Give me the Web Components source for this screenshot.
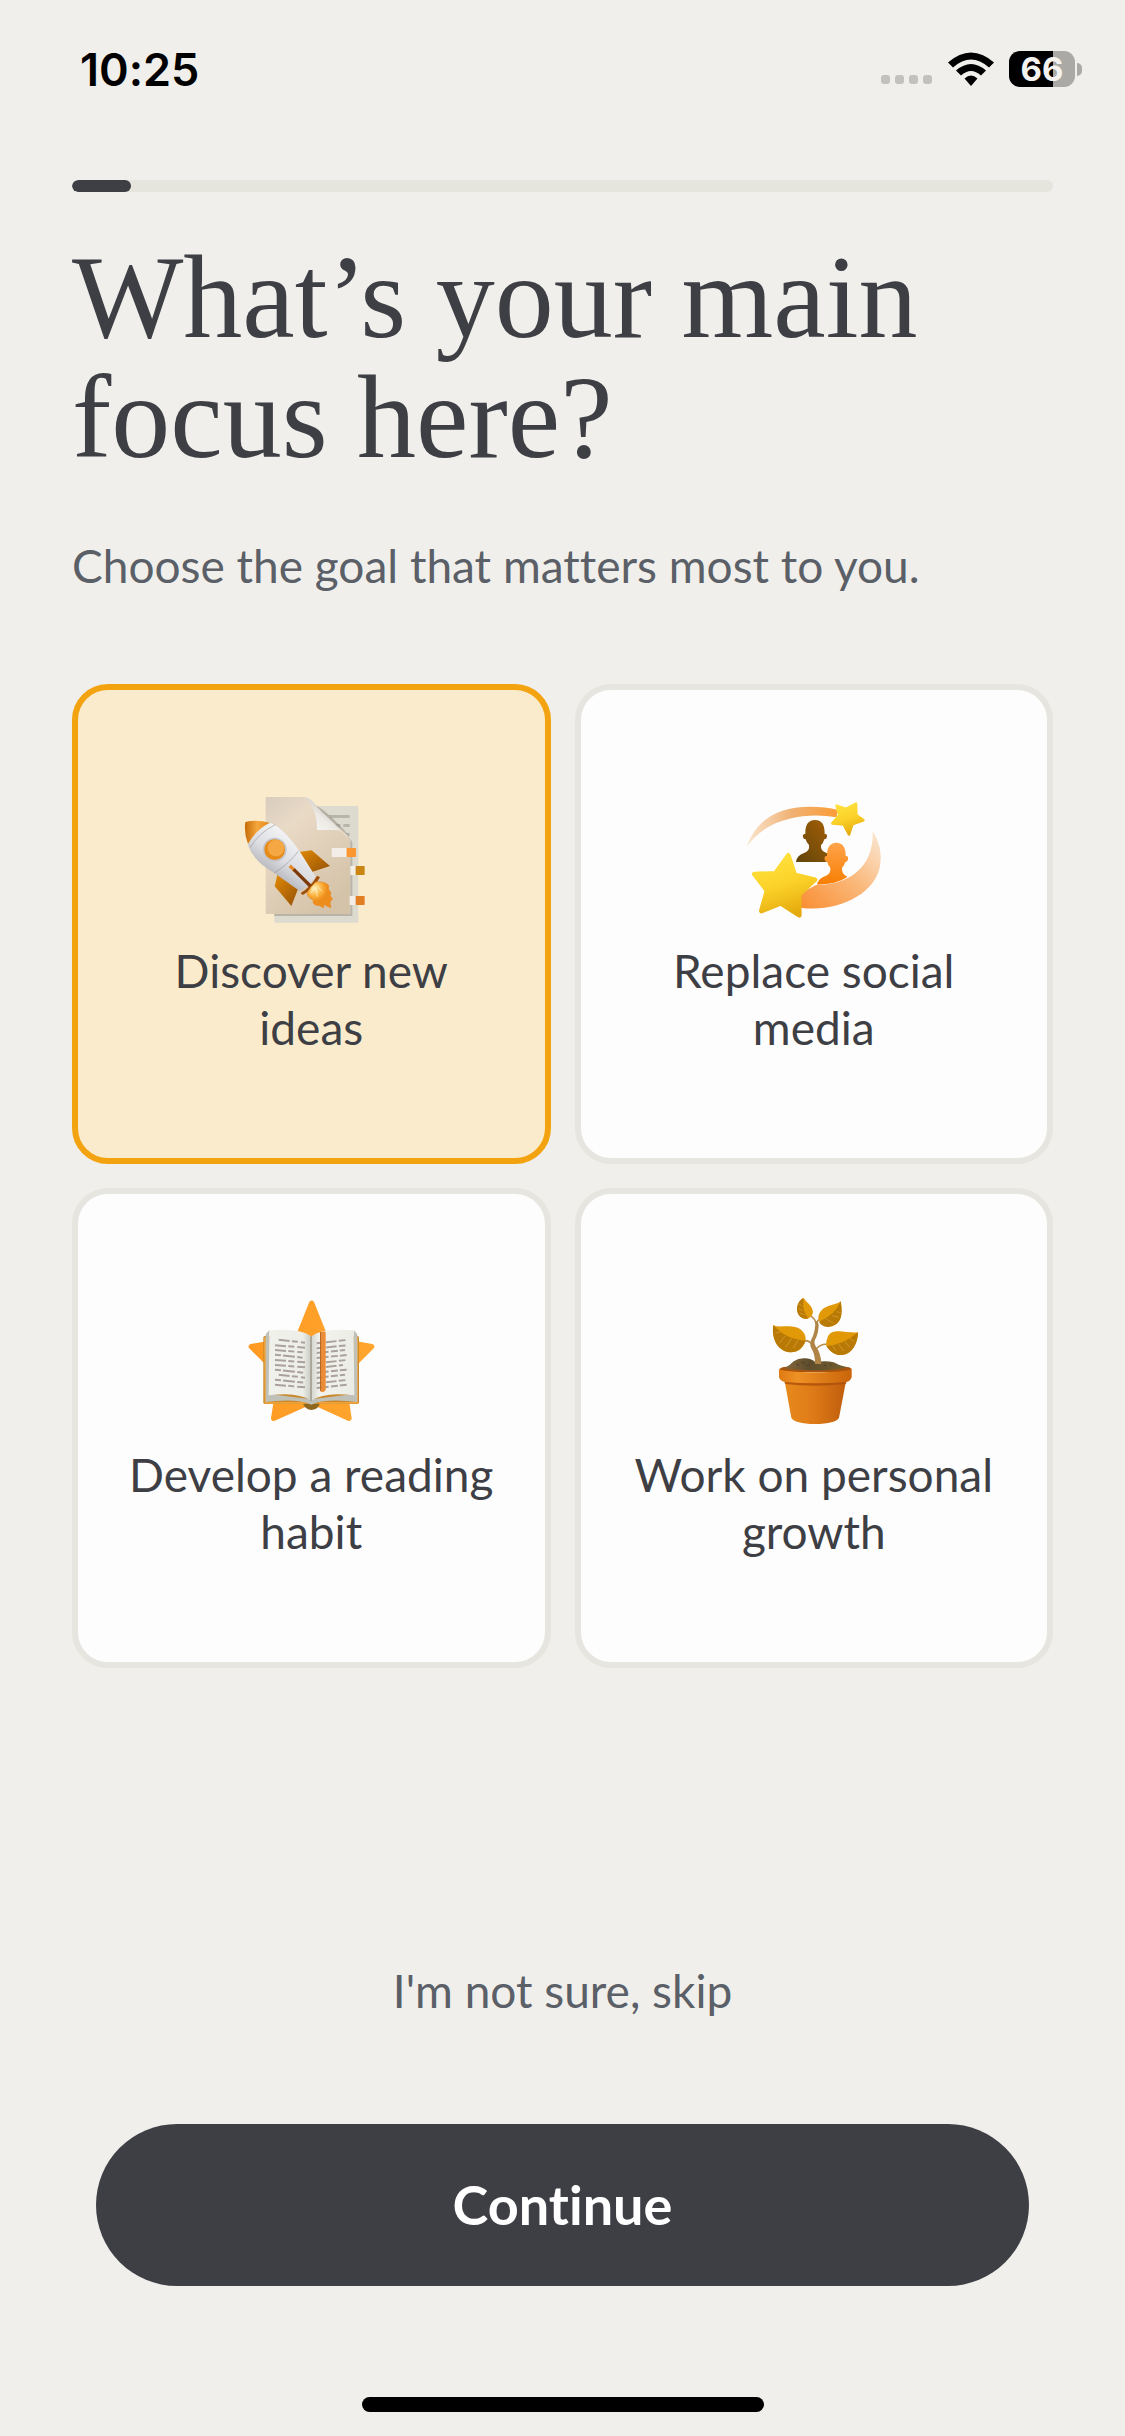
<!DOCTYPE html>
<html lang="en">
<head>
<meta charset="utf-8">
<meta name="viewport" content="width=device-width, initial-scale=1">
<title>What’s your main focus here?</title>
<style>
  :root {
    --page: #f0efeb;
    --ink: #3d3f45;
    --muted: #5b5f67;
    --line: #e6e5df;
    --accent: #f2a30f;
    --accent-soft: #fbebcd;
    --gutter: 72px;
  }

  body {
    margin: 0;
    background: var(--page);
    color: var(--ink);
    font-family: Lato, "Open Sans", sans-serif;
    font-size: 46px;
    font-variant-ligatures: none;
    line-height: 57px;
  }
</style>
</head>
<body>
<onboarding-screen>
  <status-bar slot="status" time="10:25" battery="66"></status-bar>
  <step-progress slot="progress" value="6" max="100"></step-progress>
  <h1 slot="title">What’s your main focus here?</h1>
  <p slot="subtitle">Choose the goal that matters most to you.</p>
  <goal-grid>
    <goal-card icon="rocket" selected>Discover new ideas</goal-card>
    <goal-card icon="social">Replace social media</goal-card>
    <goal-card icon="book">Develop a reading habit</goal-card>
    <goal-card icon="plant">Work on personal growth</goal-card>
  </goal-grid>
  <action-button slot="actions" variant="text">I'm not sure, skip</action-button>
  <action-button slot="actions">Continue</action-button>
</onboarding-screen>

<script>
/**
 * Creates a template element from the passed-in markup and styles.
 */
function createTemplate(templateString, styleString) {
  const template = document.createElement('template');
  template.innerHTML = `<style>*{box-sizing:border-box}${styleString}</style>${templateString}`;
  return template;
}

/** The base element, which clones the class template into an open shadow root. */
class CoreElement extends HTMLElement {
  constructor() {
    super();
    const shadowRoot = this.attachShadow({ mode: 'open' });
    shadowRoot.appendChild(this.constructor.template.content.cloneNode(true));
  }
}

/** The page frame: status, heading, content and the actions at the bottom. */
class OnboardingScreen extends CoreElement {}
OnboardingScreen.template = createTemplate(`
  <slot name="status"></slot>
  <main>
    <slot name="progress"></slot>
    <header>
      <slot name="title"></slot>
      <slot name="subtitle"></slot>
    </header>
    <slot></slot>
  </main>
  <footer><slot name="actions"></slot></footer>
  <div class="home"></div>
`, `
  :host {
    display: flex;
    flex-direction: column;
    min-height: 100vh;
  }
  main {
    padding: 42px var(--gutter) 48px;
  }
  header {
    padding: 46px 0 90px;
  }
  ::slotted(h1) {
    margin: 0 0 59px;
    font: 400 118px/120px "Liberation Serif", serif;
  }
  ::slotted(p) {
    margin: 0;
    color: var(--muted);
  }
  footer {
    display: flex;
    flex-direction: column;
    gap: 93px;
    margin-top: auto;
    padding: 0 96px;
  }
  .home {
    width: 402px;
    height: 15px;
    margin: 111px auto 24px;
    border-radius: 8px;
    background: #000;
  }
`);
customElements.define('onboarding-screen', OnboardingScreen);

/** The phone status bar with time, signal, wifi and battery. */
class StatusBar extends CoreElement {
  connectedCallback() {
    const level = this.getAttribute('battery');
    this.shadowRoot.querySelector('time').textContent = this.getAttribute('time');
    this.shadowRoot.querySelector('.cell').textContent = level;
    this.style.setProperty('--level', `${level}%`);
  }
}
StatusBar.template = createTemplate(`
  <time></time>
  <div class="icons">
    <svg class="signal" width="52" height="10" viewBox="0 0 52 10" fill="#c2c1be">
      <rect width="9" height="9" rx="3"/><rect x="14" width="9" height="9" rx="3"/>
      <rect x="28" width="9" height="9" rx="3"/><rect x="42" width="9" height="9" rx="3"/>
    </svg>
    <svg width="46" height="34" viewBox="0 0 46 34">
      <path d="M0 10.500Q23-9.500 46 10.500L41 15.500Q23-.500 5 15.500Z"/>
      <path d="M8 18.500Q23 5.500 38 18.500L33 23.500Q23 14.500 13 23.500Z"/>
      <path d="M16.500 26.500Q23 20.500 29.500 26.500L23 34Z"/>
    </svg>
    <div class="battery"><span class="cell"></span><span class="nub"></span></div>
  </div>
`, `
  :host {
    display: flex;
    align-items: center;
    justify-content: space-between;
    height: 138px;
    padding: 0 43px 0 80px;
    color: #000;
    font-family: Inter, sans-serif;
  }
  time {
    font-size: 45px;
    font-weight: 600;
  }
  .icons {
    display: flex;
    align-items: center;
    gap: 15px;
  }
  .signal {
    margin-top: 22px;
  }
  .battery {
    display: flex;
    align-items: center;
    gap: 2px;
  }
  .cell {
    width: 66px;
    border-radius: 11px;
    background: linear-gradient(90deg, #000 var(--level), #aaa9a6 var(--level));
    color: #f4f3f0;
    font-size: 33px;
    font-weight: 700;
    line-height: 36px;
    text-align: center;
  }
  .nub {
    width: 5px;
    height: 13px;
    border-radius: 0 5px 5px 0;
    background: #aaa9a6;
  }
`);
customElements.define('status-bar', StatusBar);

/** The bar that shows how far the onboarding has come. */
class StepProgress extends CoreElement {
  connectedCallback() {
    const progress = this.shadowRoot.querySelector('progress');
    progress.max = this.getAttribute('max');
    progress.value = this.getAttribute('value');
  }
}
StepProgress.template = createTemplate('<progress aria-label="Progress"></progress>', `
  :host {
    display: flex;
  }
  progress {
    appearance: none;
    width: 100%;
    height: 12px;
    border: 0;
    border-radius: 6px;
    background: #e5e4dd;
    overflow: hidden;
  }
  ::-webkit-progress-bar {
    background: #e5e4dd;
  }
  ::-webkit-progress-value {
    border-radius: 6px;
    background: var(--ink);
  }
`);
customElements.define('step-progress', StepProgress);

/** Lays out the cards and keeps only one of them selected. */
class GoalGrid extends CoreElement {
  connectedCallback() {
    this.addEventListener('goal-change', (event) => {
      this.querySelectorAll('goal-card').forEach((card) => {
        card.toggleAttribute('selected', card === event.target);
      });
    });
  }
}
GoalGrid.template = createTemplate('<slot></slot>', `
  :host {
    display: grid;
    grid-template-columns: 1fr 1fr;
    grid-auto-rows: minmax(480px, auto);
    gap: 24px;
  }
`);
customElements.define('goal-grid', GoalGrid);

/** A selectable goal with a picture and a label. */
class GoalCard extends CoreElement {
  static get observedAttributes() {
    return ['selected'];
  }

  connectedCallback() {
    this.shadowRoot.querySelector('goal-icon').setAttribute('name', this.getAttribute('icon'));
    this.shadowRoot.querySelector('input').addEventListener('change', () => {
      this.dispatchEvent(new CustomEvent('goal-change', { bubbles: true }));
    });
  }

  attributeChangedCallback() {
    this.shadowRoot.querySelector('input').checked = this.hasAttribute('selected');
  }
}
GoalCard.template = createTemplate(`
  <label>
    <input type="radio" name="goal">
    <goal-icon></goal-icon>
    <span><slot></slot></span>
  </label>
`, `
  :host {
    display: grid;
  }
  label {
    display: flex;
    flex-direction: column;
    align-items: center;
    justify-content: center;
    gap: 12px;
    position: relative;
    padding: 0 40px 6px;
    border: 6px solid var(--line);
    border-radius: 36px;
    background: #fdfdfd;
    text-align: center;
    cursor: pointer;
  }
  :host([selected]) label {
    border-color: var(--accent);
    background: var(--accent-soft);
  }
  input {
    position: absolute;
    inset: 0;
    margin: 0;
    opacity: 0;
  }
`);
customElements.define('goal-card', GoalCard);

const icons = {
  rocket: {
    viewBox: '28 21 432 432',
    art: `
      <defs>
        <linearGradient id="page" x1="0" y1="0" x2="0.600" y2="1"><stop stop-color="#d8ccbd"/><stop offset=".3" stop-color="#e9dac6"/><stop offset="1" stop-color="#d5c3a9"/></linearGradient>
        <linearGradient id="curl" x1="0" y1="1" x2=".7" y2=".2"><stop stop-color="#fff"/><stop offset=".6" stop-color="#edeae5"/><stop offset="1" stop-color="#bbb6ae"/></linearGradient>
        <linearGradient id="body" x1="1" y1="0" x2=".3" y2="1"><stop offset=".2" stop-color="#fafafb"/><stop offset=".6" stop-color="#dcdde1"/><stop offset="1" stop-color="#94969c"/></linearGradient>
        <linearGradient id="nose" x1="0" x2="1"><stop stop-color="#c56c08"/><stop offset=".5" stop-color="#f6a73e"/><stop offset="1" stop-color="#e18613"/></linearGradient>
        <linearGradient id="fin" x1="0" y1="0" x2="1" y2="1"><stop stop-color="#e18a05"/><stop offset="1" stop-color="#955007"/></linearGradient>
        <radialGradient id="flame" cx=".3" cy=".25"><stop stop-color="#fff0b8"/><stop offset=".6" stop-color="#fbb13c"/><stop offset="1" stop-color="#ed8d1c"/></radialGradient>
      </defs>
      <path fill="#dddacf" d="M134 81H386V431H134Z"/>
      <path fill="#b7b5ac" d="M296 108H360V117H305ZM318 135h14v9h-10ZM341 135h19v9h-19ZM340 162h20v9h-14Z"/>
      <path fill="#aaa496" opacity=".7" d="M362 180L368 190V411H134V405H362Z"/>
      <path fill="#8d8678" opacity=".5" d="M258 78Q300 103 352 163L361 183L300 125Z"/>
      <path fill="url(#page)" d="M108 54H222Q249 56 262 90L350 165Q361 176 361 196V405H108Z"/>
      <path fill="url(#curl)" d="M222 54Q249 57 263 88Q310 127 356 179Q345 151 308 153H262Q263 82 222 54Z"/>
      <path fill="#f3efe8" d="M306 207H351V234H306ZM362 261H378V288H362ZM360 351H378V378H360Z"/>
      <rect x="351" y="207" width="28" height="27" rx="2" fill="#fb9731"/>
      <rect x="378" y="261" width="27" height="27" rx="2" fill="#cb8513"/>
      <rect x="378" y="351" width="27" height="27" rx="2" fill="#e07e21"/>
      <path fill="url(#fin)" d="M202 220L246 214L301 261L240 281Z"/>
      <path fill="url(#fin)" d="M143 287L135 322L185 381L205 330Z"/>
      <path fill="url(#body)" d="M122 132Q156 142 208 214L258 293Q240 320 210 336L133 281Q73 249 54 197Q75 153 122 132Z"/>
      <path fill="url(#nose)" d="M47 129Q78 120 120 131Q80 151 55 195Q42 161 47 129Z"/>
      <path fill="none" stroke="#9a9ca1" stroke-width="2" d="M137 137Q88 161 61 206M207 215Q180 253 134 282"/>
      <circle cx="135" cy="212" r="36" fill="#c4c6cb"/>
      <circle cx="135" cy="212" r="31" fill="#e78b18"/>
      <circle cx="139" cy="207" r="25" fill="#f5a743"/>
      <path fill="#9d4f0b" d="M213 342Q245 322 262 290L271 295Q252 330 219 348Z"/>
      <path fill="none" stroke="#e3882a" stroke-width="10" d="M180 260L196 275"/>
      <path fill="none" stroke="#7c3a09" stroke-width="10" d="M192 271L242 321"/>
      <path fill="url(#flame)" stroke="#e98516" stroke-width="2" d="M232 342Q242 324 258 309Q287 307 297 319L296 329L304 342L301 350L308 359L301 370L303 386L290 380L283 376L281 386L270 380L257 378L250 371L252 364Q235 357 232 342Z"/>
      <path fill="none" stroke="#fff3cd" stroke-width="2" d="M255 323L244 343M259 326L263 353M263 323L279 338"/>`,
  },
  social: {
    viewBox: '36 21 432 432',
    art: `
      <defs>
        <linearGradient id="arc"><stop stop-color="#fae5d0"/><stop offset=".5" stop-color="#f0b172"/><stop offset="1" stop-color="#fb9c38"/></linearGradient>
        <linearGradient id="swoosh" x1="0" y1="1" x2="1" y2="0"><stop stop-color="#f98d32"/><stop offset=".5" stop-color="#fab778"/><stop offset="1" stop-color="#fae9d7"/></linearGradient>
        <linearGradient id="star" x1=".3" y1="0" x2=".6" y2="1"><stop stop-color="#ffe23c"/><stop offset=".5" stop-color="#fbd128"/><stop offset="1" stop-color="#e5aa0d"/></linearGradient>
        <linearGradient id="dark" x1="0" y1="1" x2="1" y2="0"><stop stop-color="#62450b"/><stop offset="1" stop-color="#a86006"/></linearGradient>
        <linearGradient id="light" x1="0" y1="0" x2="0" y2="1"><stop stop-color="#ffa44a"/><stop offset="1" stop-color="#f77e03"/></linearGradient>
      </defs>
      <path fill="url(#arc)" d="M50 204Q91 84 240 83Q288 83 322 92L320 115Q279 108 240 110Q110 117 50 204Z"/>
      <path fill="url(#dark)" d="M255 123C274 123 285 136 284 165C294 162 294 180 283 181Q280 192 273 199Q271 216 288 221Q309 228 312 249H198Q200 229 222 222Q240 216 237 198Q229 191 227 181C216 180 216 162 226 165C225 136 236 123 255 123Z"/>
      <path fill="url(#light)" d="M319 191C338 191 348 206 347 231C357 228 357 247 346 249Q343 261 336 266Q334 283 350 292L352 294Q321 316 261 317Q265 298 286 291Q303 285 301 266Q294 260 292 249C281 247 281 228 291 231C290 206 300 191 319 191Z"/>
      <path fill="url(#swoosh)" d="M428 156Q460 205 450 262C434 348 319 402 210 386L208 345L258 318C350 319 433 270 428 156Z"/>
      <path fill="url(#star)" stroke="url(#star)" stroke-width="14" stroke-linejoin="round" d="M175 229L194 287L255 302L207 347L208 409L152 373L94 396L111 335L73 285L136 283Z"/>
      <path fill="url(#star)" stroke="url(#star)" stroke-width="8" stroke-linejoin="round" d="M378 74L379 108L400 124L367 136L357 166L341 136L307 133L328 109L320 80L348 90Z"/>`,
  },
  book: {
    viewBox: '14 18 432 432',
    art: `
      <defs>
        <linearGradient id="star" x1="0" y1="0" x2="1" y2="0"><stop stop-color="#ff9a22"/><stop offset="1" stop-color="#ffa62f"/></linearGradient>
        <linearGradient id="left"><stop stop-color="#f1f1ec"/><stop offset=".8" stop-color="#edeee8"/><stop offset="1" stop-color="#c7c8c0"/></linearGradient>
        <linearGradient id="right"><stop stop-color="#d4d5ce"/><stop offset=".2" stop-color="#f2f3ed"/><stop offset="1" stop-color="#ecece6"/></linearGradient>
      </defs>
      <path fill="url(#star)" stroke="url(#star)" stroke-width="16" stroke-linejoin="round" d="M232 58L274 163L412 188L325 275L344 403L232 352L118 403L138 275L51 188L190 163Z"/>
      <path fill="#8e681f" d="M204 355Q212 378 232 378Q253 377 258 355Z"/>
      <rect x="87" y="156" width="287" height="204" rx="5" fill="#c8882b"/>
      <path fill="#efa33a" d="M89 160H96V354H205L218 359H91ZM366 160H371V359H250L257 354H366Z"/>
      <path fill="#bfc1b8" d="M94 151L105 138V330L231 346V362Q187 342 94 354ZM231 362V346L358 330V138L369 151V354Q274 342 231 362Z"/>
      <path fill="url(#left)" d="M105 139Q200 132 231 158V350Q190 322 103 334Z"/>
      <path fill="url(#right)" d="M231 158Q261 132 358 139L360 334Q270 322 231 350Z"/>
      <g fill="none" stroke="#aaa19b" stroke-width="6">
        <path stroke-dasharray="33 7 18 9" d="M133 167L212 176M122 184L212 191M122 198L205 205M122 228L212 235M122 243L212 250M133 272L212 281M122 302L212 310"/>
        <path stroke-dasharray="18 6 36 7" d="M122 212L205 221M122 257L207 266M122 287L212 296"/>
        <path stroke-dasharray="20 8 32 7" d="M247 178L337 168M247 193L337 184M247 238L337 228M247 252L326 243M247 298L337 288"/>
        <path stroke-dasharray="36 7 21 6" d="M247 207L332 198M247 222L337 213M247 266L337 257M247 282L332 272M247 312L337 302"/>
      </g>
      <path stroke="#888980" stroke-width="3" d="M230 158V351"/>
      <path fill="#b96a22" d="M257 144H262V324L257 320Z"/>
      <path fill="#ee8b35" d="M261 143H274V319L266 325L261 323Z"/>`,
  },
  plant: {
    viewBox: '-39 18 432 432',
    art: `
      <defs>
        <linearGradient id="pot"><stop stop-color="#e78a1b"/><stop offset=".45" stop-color="#df7b17"/><stop offset="1" stop-color="#bf5d0d"/></linearGradient>
        <linearGradient id="rim"><stop stop-color="#df7a13"/><stop offset=".25" stop-color="#ee9125"/><stop offset="1" stop-color="#c9640a"/></linearGradient>
        <linearGradient id="soil"><stop stop-color="#84663b"/><stop offset=".4" stop-color="#5e4d2d"/><stop offset="1" stop-color="#74602f"/></linearGradient>
      </defs>
      <path fill="url(#pot)" d="M89 292H273L252 401Q242 419 180 420Q119 419 109 401Z"/>
      <path fill="#ac4f0b" opacity=".8" d="M88 292H275L273 300Q181 310 90 300Z"/>
      <path fill="#a6530e" d="M73 255Q82 247 98 248H266Q283 247 290 255L278 264H84Z"/>
      <path fill="url(#soil)" d="M88 253Q105 244 116 232Q132 221 152 223Q174 225 182 236Q207 228 236 235Q254 246 276 250Q250 259 181 259Q112 258 88 253Z"/>
      <path fill="none" stroke="#493d27" stroke-width="3" d="M124 240l8 4M140 234q10 0 8 8M154 246l9-4M207 243l7 3M224 239l5 5"/>
      <path fill="url(#rim)" d="M72 254Q82 264 181 265Q280 264 290 254V280Q286 292 274 294Q182 302 88 294Q76 291 72 280Z"/>
      <path fill="none" stroke="#b88d4c" stroke-linecap="round" stroke-width="5" d="M183 117Q180 105 170 98M185 117Q188 108 195 104M172 182Q162 169 149 170M181 200Q190 181 217 180"/>
      <path fill="#af8446" d="M181 112Q191 111 191 125Q190 146 184 160Q174 173 182 187Q198 207 199 240H180Q181 212 169 193Q161 177 173 158Q181 140 181 112Z"/>
      <g fill="#e19907">
        <path d="M146 42C151 53 172 63 174 84Q171 105 150 105C117 98 123 52 146 42Z"/>
        <path d="M257 52C264 93 259 126 219 129Q188 119 190 98C201 59 237 68 257 52Z"/>
        <path d="M55 123C71 135 123 114 145 145Q153 154 152 170C141 201 119 208 95 203C61 193 50 153 55 123Z"/>
        <path d="M309 145C278 149 233 129 219 157Q212 171 214 186C232 210 250 218 274 210C300 199 309 166 309 145Z"/>
      </g>
      <g fill="#b87905">
        <path d="M146 42Q139 77 160 104C117 107 118 54 146 42Z"/>
        <path d="M257 52Q240 94 192 113Q197 126 219 129C261 124 264 92 257 52Z"/>
        <path d="M55 123Q90 165 152 170C138 202 116 208 95 203C60 193 50 153 55 123Z"/>
        <path d="M309 145Q265 183 214 186C230 211 250 218 274 210C300 199 309 166 309 145Z"/>
      </g>
      <path fill="none" stroke="#dca33a" stroke-width="2" d="M142 67l-10-7M145 81l-15-7M151 93l-17-6M244 83l13 3M231 95l20 5M214 105l22 13M76 144l-15 3M91 155l-18 23M110 163l-18 27M130 168l-15 24M285 163l12 10M269 173l16 17M250 180l16 21M233 184l9 17"/>`,
  },
};

/** Draws one of the goal pictures. */
class GoalIcon extends CoreElement {
  static get observedAttributes() {
    return ['name'];
  }

  attributeChangedCallback(attribute, oldValue, newValue) {
    const icon = icons[newValue];
    const svg = this.shadowRoot.querySelector('svg');
    svg.setAttribute('viewBox', icon.viewBox);
    svg.innerHTML = icon.art;
  }
}
GoalIcon.template = createTemplate('<svg aria-hidden="true"></svg>', `
  :host {
    display: block;
    width: 144px;
    height: 144px;
  }
  svg {
    display: block;
    width: 100%;
    height: 100%;
  }
`);
customElements.define('goal-icon', GoalIcon);

/** A full-width button, solid or text only. */
class ActionButton extends CoreElement {}
ActionButton.template = createTemplate('<button type="button"><slot></slot></button>', `
  :host {
    display: grid;
  }
  button {
    padding: 48px;
    border: 0;
    border-radius: 81px;
    background: var(--ink);
    color: #fff;
    font: 700 54px/66px Lato, "Open Sans", sans-serif;
    font-variant-ligatures: none;
    cursor: pointer;
  }
  :host([variant="text"]) button {
    padding: 12px;
    background: none;
    color: var(--muted);
    font: inherit;
  }
`);
customElements.define('action-button', ActionButton);
</script>
</body>
</html>
